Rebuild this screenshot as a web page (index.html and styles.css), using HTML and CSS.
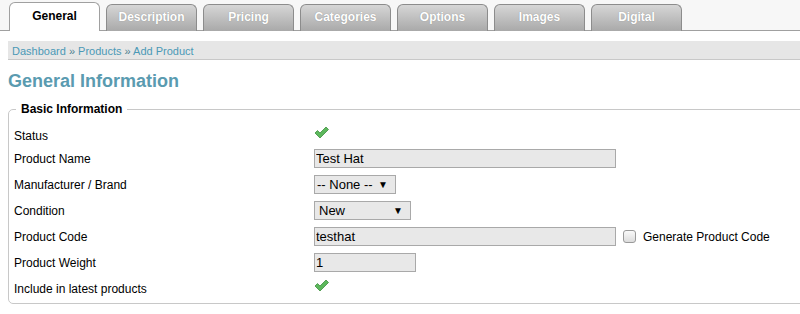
FILE: index.html
```html
<!DOCTYPE html>
<html lang="en">
<head>
    <meta charset="UTF-8">
    <title>Add Product</title>
    <link rel="stylesheet" href="styles.css">
</head>
<body>
    <div class="tabbar">
        <a class="tab active">General</a>
        <a class="tab">Description</a>
        <a class="tab">Pricing</a>
        <a class="tab">Categories</a>
        <a class="tab">Options</a>
        <a class="tab">Images</a>
        <a class="tab">Digital</a>
    </div>

    <div class="page">
        <div class="breadcrumb">
            <a>Dashboard</a> &raquo; <a>Products</a> &raquo; <a>Add Product</a>
        </div>

        <h1>General Information</h1>

        <fieldset class="box">
            <legend>Basic Information</legend>
            <div class="row row-status">
                <label>Status</label>
                <div class="field"><svg class="tick" width="15" height="13" viewBox="0 0 15 13"><path d="M1 7 L3.5 4.5 L6 7 L12 1 L14.5 3.5 L6 12 Z" fill="#5cb85c" stroke="#3f8f3f" stroke-width="0.8" stroke-linejoin="round"/></svg></div>
            </div>
            <div class="row">
                <label>Product Name</label>
                <div class="field"><input class="text wide" type="text" value="Test Hat"></div>
            </div>
            <div class="row">
                <label>Manufacturer / Brand</label>
                <div class="field"><span class="select sel-brand">-- None --<i>&#9660;</i></span></div>
            </div>
            <div class="row">
                <label>Condition</label>
                <div class="field"><span class="select sel-cond">New<i>&#9660;</i></span></div>
            </div>
            <div class="row">
                <label>Product Code</label>
                <div class="field">
                    <input class="text wide" type="text" value="testhat">
                    <span class="check"><span class="box-check"></span>Generate Product Code</span>
                </div>
            </div>
            <div class="row">
                <label>Product Weight</label>
                <div class="field"><input class="text short" type="text" value="1"></div>
            </div>
            <div class="row row-latest">
                <label>Include in latest products</label>
                <div class="field"><svg class="tick" width="15" height="13" viewBox="0 0 15 13"><path d="M1 7 L3.5 4.5 L6 7 L12 1 L14.5 3.5 L6 12 Z" fill="#5cb85c" stroke="#3f8f3f" stroke-width="0.8" stroke-linejoin="round"/></svg></div>
            </div>
        </fieldset>
    </div>
</body>
</html>
```

FILE: styles.css
```css
html {
    overflow: hidden;
}
body {
    margin: 0;
    font-family: "Liberation Sans", Arial, sans-serif;
    font-size: 12px;
    color: #000;
    background: #fff;
}
.tabbar {
    display: flex;
    gap: 6px;
    height: 30px;
    padding: 0 0 0 9px;
    background: #f7f7f7;
    border-bottom: 1px solid #a0a0a0;
    align-items: flex-end;
}
.tab {
    width: 89px;
    height: 26px;
    margin-bottom: -1px;
    line-height: 25px;
    text-align: center;
    font-size: 12px;
    font-weight: bold;
    color: #fff;
    text-shadow: 0 0 1px #888;
    background: linear-gradient(#d6d6d6, #a9a9a9);
    border: 1px solid #8c8c8c;
    border-bottom: none;
    border-radius: 6px 6px 0 0;
}
.tab.active {
    height: 28px;
    line-height: 27px;
    color: #000;
    text-shadow: none;
    background: #fff;
    border-color: #a0a0a0;
}
.page {
    padding: 10px 0 0 8px;
}
.breadcrumb {
    height: 17px;
    padding: 1px 0 0 4px;
    line-height: 19px;
    font-size: 11px;
    color: #4f7f8f;
    background: #e6e6e6;
    border-bottom: 1px solid #c8c8c8;
}
.breadcrumb a {
    color: #4b99b6;
}
h1 {
    margin: 11px 0 10px;
    font-size: 18px;
    color: #5a9bb0;
}
.box {
    box-sizing: border-box;
    width: 830px;
    margin: 0;
    padding: 11px 0 7px 5px;
    border: 1px solid #c8c8c8;
    border-radius: 5px;
}
.box legend {
    margin-left: 2px;
    padding: 0 5px;
    font-weight: bold;
    font-size: 12px;
}
.row {
    display: flex;
    align-items: center;
    height: 19px;
    margin-bottom: 7px;
}
.row-status {
    height: 16px;
    margin-bottom: 6px;
    align-items: flex-start;
}
.row-latest {
    height: 17px;
    margin-bottom: 0;
    align-items: flex-start;
}
.row-status label,
.row-latest label {
    align-self: flex-end;
}
.row label {
    width: 300px;
}
.field {
    display: flex;
    align-items: center;
}
.tick {
    display: block;
}
.row-status .tick {
    margin-top: -1px;
}
.text {
    box-sizing: border-box;
    height: 19px;
    margin: 0;
    padding: 0 1px;
    font-family: "Liberation Sans", Arial, sans-serif;
    font-size: 13px;
    color: #000;
    background: #e8e8e8;
    border: 1px solid #a9a9a9;
}
.wide {
    width: 302px;
}
.short {
    width: 102px;
}
.select {
    box-sizing: border-box;
    display: flex;
    justify-content: space-between;
    align-items: center;
    height: 19px;
    padding: 0 7px 0 2px;
    font-size: 13px;
    background: #e8e8e8;
    border: 1px solid #a9a9a9;
}
.sel-cond {
    padding-left: 4px;
}
.select i {
    font-style: normal;
    font-size: 10px;
}
.sel-brand {
    width: 82px;
}
.sel-cond {
    width: 97px;
}
.check {
    display: flex;
    align-items: center;
    margin-left: 7px;
}
.box-check {
    width: 11px;
    height: 11px;
    margin-right: 7px;
    background: linear-gradient(#fafafa, #dcdcdc);
    border: 1px solid #9a9a9a;
    border-radius: 3px;
}
```
